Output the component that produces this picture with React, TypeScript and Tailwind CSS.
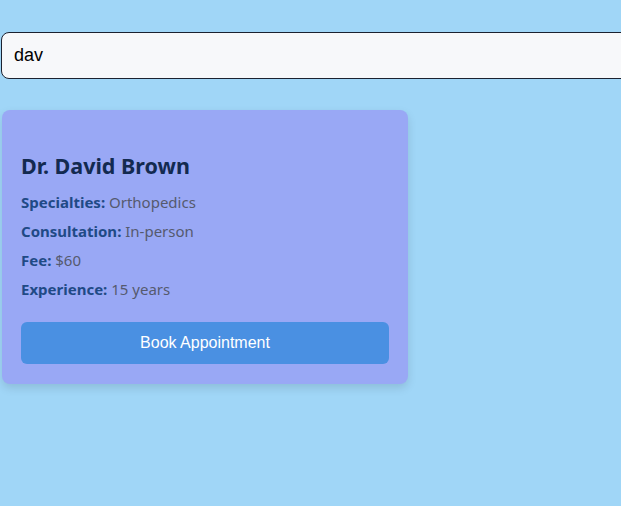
const doctor = {
  name: 'Dr. David Brown',
  specialties: 'Orthopedics',
  consultation: 'In-person',
  fee: '$60',
  experience: '15 years',
};

function Row({ label, value }: { label: string; value: string }) {
  return (
    <p className="text-[15px] leading-[29px] text-[#555a6e]">
      <span className="font-bold text-[#1f4a86]">{label}:</span> {value}
    </p>
  );
}

export default function App() {
  return (
    <div className="min-h-[506px] w-[621px] overflow-hidden bg-[#a0d6f7] pt-8 font-['Noto_Sans',sans-serif]">
      <input
        defaultValue="dav"
        className="ml-px block h-[47px] w-[660px] rounded-lg border border-[#1c2230] bg-[#f7f8fa] px-3 font-['Liberation_Sans',Arial,sans-serif] text-lg text-black outline-none"
      />
      <div className="ml-[2px] mt-[31px] w-[406px] rounded-lg bg-[#99a8f5] px-[19px] pb-[20px] pt-[41px] shadow-[0_4px_10px_rgba(0,0,0,0.12)]">
        <h2 className="mb-[7px] text-[21.5px] font-bold leading-[30px] text-[#132a50]">
          {doctor.name}
        </h2>
        <Row label="Specialties" value={doctor.specialties} />
        <Row label="Consultation" value={doctor.consultation} />
        <Row label="Fee" value={doctor.fee} />
        <Row label="Experience" value={doctor.experience} />
        <button className="mt-[18px] h-[42px] w-full rounded-md bg-[#4a90e2] font-['Liberation_Sans',Arial,sans-serif] text-base text-white">
          Book Appointment
        </button>
      </div>
    </div>
  );
}
